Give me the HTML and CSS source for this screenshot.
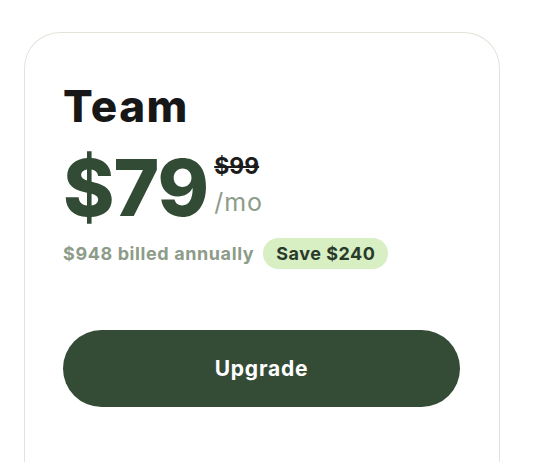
FILE: index.html
```html
<!DOCTYPE html>
<html>
<head>
<meta charset="utf-8">
<title>Team</title>
<link rel="stylesheet" href="styles.css">
</head>
<body>
	<div class="card">
		<h2 class="plan">Team</h2>
		<div class="price">
			<span class="amount">$79</span>
			<div class="side">
				<s class="old">$99</s>
				<span class="per">/mo</span>
			</div>
		</div>
		<div class="billed">
			<span class="annual">$948 billed annually</span>
			<span class="save">Save $240</span>
		</div>
		<button class="upgrade">Upgrade</button>
	</div>
</body>
</html>
```
FILE: styles.css
```css
*{margin: 0;padding: 0;box-sizing: border-box;}
body{
	background: #fff;
	font-family: Inter, "Liberation Sans", sans-serif;
	padding: 32px 0 0 24px;
}
/* card runs on past the bottom of the window */
.card{
	width: 476px;
	height: 430px;
	border: 1px solid #e4e2d9;
	border-bottom: none;
	border-radius: 36px 36px 0 0;
	padding: 47px 39px 0 38px;
}
.plan{
	font-size: 44px;
	font-weight: 800;
	line-height: 52px;
	color: #171717;
	letter-spacing: 1.5px;
}
.price{
	display: flex;
	align-items: flex-start;
	gap: 6px;
	margin-top: 13px;
}
.amount{
	font-size: 78px;
	font-weight: 800;
	line-height: 86px;
	color: #324b34;
	letter-spacing: -1px;
}
.side{
	display: flex;
	flex-direction: column;
	padding-top: 6px;
}
.old{
	font-size: 23px;
	font-weight: 700;
	color: #1c1c1c;
	line-height: 30px;
}
.per{
	font-size: 25px;
	color: #8c9c88;
	line-height: 34px;
	letter-spacing: 1px;
	margin-top: 4px;
}
.billed{
	display: flex;
	align-items: center;
	gap: 9px;
	margin-top: 7px;
}
.annual{
	font-size: 18px;
	font-weight: 700;
	color: #8d9c89;
	letter-spacing: 0.6px;
}
.save{
	font-size: 18px;
	font-weight: 700;
	color: #283a2a;
	background: #d8eec3;
	border-radius: 16px;
	padding: 5px 13px;
	letter-spacing: 0.5px;
}
.upgrade{
	display: block;
	width: 397px;
	height: 77px;
	margin-top: 61px;
	border: none;
	border-radius: 39px;
	background: #344c36;
	color: #fff;
	font-family: inherit;
	font-size: 21px;
	font-weight: 700;
	letter-spacing: 0.8px;
}
```
